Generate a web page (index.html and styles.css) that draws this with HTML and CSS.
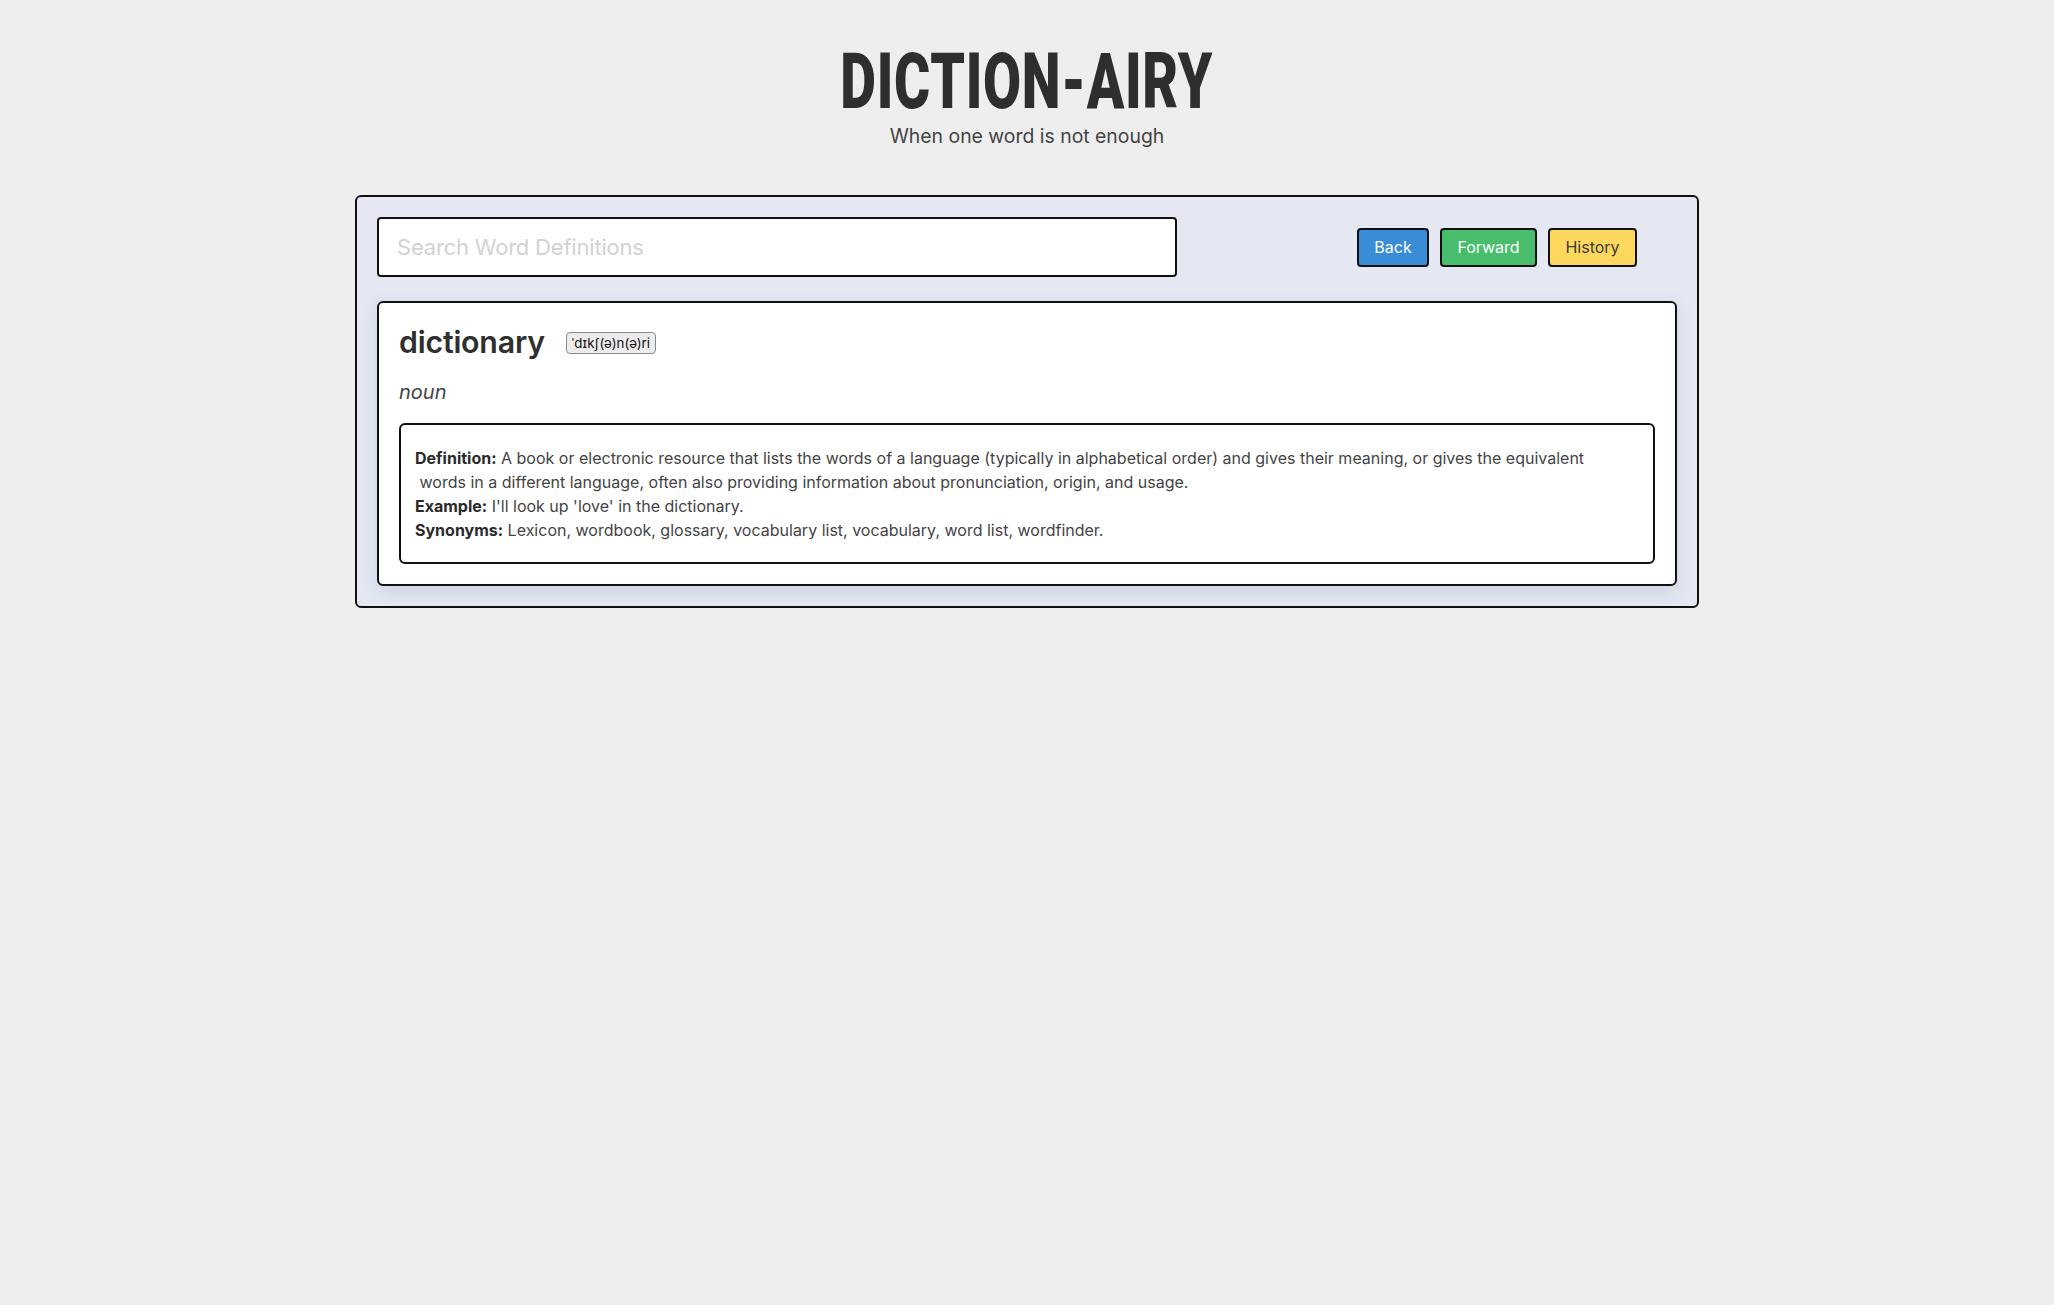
FILE: index.html
```html
<!DOCTYPE html>
<html lang="en">
<head>
<meta charset="utf-8">
<title>Diction-airy</title>
<link rel="stylesheet" href="styles.css">
</head>
<body>
<header class="masthead">
  <h1 class="logo"><span class="logo-text">DICTION-AIRY</span></h1>
  <p class="tagline">When one word is not enough</p>
</header>
<main class="panel">
  <div class="toolbar">
    <input class="search" type="text" placeholder="Search Word Definitions">
    <div class="nav-buttons">
      <button class="btn btn-back">Back</button>
      <button class="btn btn-forward">Forward</button>
      <button class="btn btn-history">History</button>
    </div>
  </div>
  <section class="card">
    <div class="word-row">
      <h2 class="word">dictionary</h2>
      <button class="phonetic">ˈdɪkʃ(ə)n(ə)ri</button>
    </div>
    <p class="pos">noun</p>
    <div class="meaning">
      <p class="line"><b>Definition:</b> A book or electronic resource that lists the words of a language (typically in alphabetical order) and gives their meaning, or gives the equivalent<br>&nbsp;words in a different language, often also providing information about pronunciation, origin, and usage.</p>
      <p class="line"><b>Example:</b> I'll look up 'love' in the dictionary.</p>
      <p class="line"><b>Synonyms:</b> Lexicon, wordbook, glossary, vocabulary list, vocabulary, word list, wordfinder.</p>
    </div>
  </section>
</main>
</body>
</html>
```

FILE: styles.css
```css
* { box-sizing: border-box; }

body {
  margin: 0;
  background: #eeeeee;
  font-family: Inter, "Noto Sans", sans-serif;
  color: #333;
}

.masthead {
  text-align: center;
  padding-top: 41px;
}

.logo {
  margin: 0;
  height: 82px;
  line-height: 82px;
  font-family: Roboto, "Liberation Sans", sans-serif;
  font-weight: 900;
  font-size: 78px;
  color: #2e2e2e;
}

.logo-text {
  display: inline-block;
  transform: scaleX(0.707);
  letter-spacing: 1px;
}

.tagline {
  margin: 1px 0 0;
  font-size: 19.4px;
  line-height: 24px;
  color: #444;
}

.panel {
  width: 1344px;
  margin: 47px auto 0;
  background: #e5e8f3;
  border: 2px solid #111;
  border-radius: 6px;
  padding: 20px;
}

.toolbar {
  display: flex;
  align-items: center;
}

.search {
  width: 800px;
  height: 60px;
  border: 2px solid #111;
  border-radius: 4px;
  padding: 0 18px;
  font-family: Inter, sans-serif;
  font-size: 22px;
  color: #333;
  background: #fff;
  outline: none;
}

.search::placeholder {
  color: #d2d2d2;
  letter-spacing: -0.2px;
}

.nav-buttons {
  margin-left: auto;
  margin-right: 40px;
  display: flex;
  gap: 11px;
}

.btn {
  height: 39px;
  padding: 0 15px;
  border: 2px solid #111;
  border-radius: 4px;
  font-family: Inter, sans-serif;
  font-size: 16px;
  color: #fff;
  cursor: pointer;
}

.btn-back { background: #388dd6; width: 72px; }
.btn-forward { background: #48be6d; width: 97px; }
.btn-history { background: #fdd85d; color: #3b3b3b; width: 89px; }

.card {
  margin-top: 24px;
  background: #fff;
  border: 2px solid #111;
  border-radius: 6px;
  padding: 20px;
  box-shadow: 0 6px 18px rgba(60, 70, 110, 0.14);
}

.word-row {
  display: flex;
  align-items: center;
  gap: 21px;
}

.word {
  margin: 0;
  font-size: 30.3px;
  line-height: 38px;
  font-weight: 600;
  color: #2f2f2f;
  letter-spacing: -0.2px;
}

.phonetic {
  font-family: Inter, "DejaVu Sans", sans-serif;
  font-size: 13.3px;
  height: 22px;
  padding: 0 5px;
  background: #ececec;
  border: 1px solid #8a8a8a;
  border-radius: 4px;
  color: #111;
  margin-top: 2px;
}

.pos {
  margin: 19px 0 0;
  font-style: italic;
  font-size: 20px;
  line-height: 24px;
  color: #444;
}

.meaning {
  margin-top: 19px;
  border: 2px solid #111;
  border-radius: 6px;
  padding: 21px 14px 20px;
}

.line {
  margin: 0;
  font-size: 16px;
  line-height: 24px;
  color: #444;
}

.line b {
  color: #2a2a2a;
  font-weight: 700;
}
```
